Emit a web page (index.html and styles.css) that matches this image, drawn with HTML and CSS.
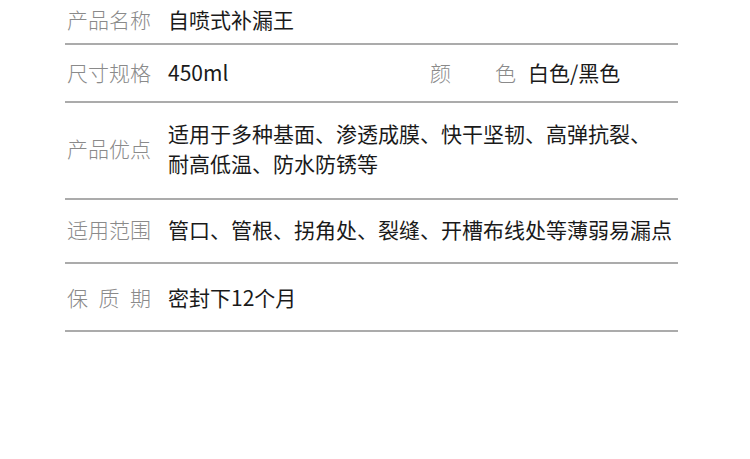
FILE: index.html
```html
<!DOCTYPE html>
<html lang="zh-CN">
<head>
<meta charset="utf-8">
<link rel="stylesheet" href="styles.css">
</head>
<body>
<div class="table">
  <div class="row r1">
    <div class="label">产品名称</div>
    <div class="value">自喷式补漏王</div>
  </div>
  <div class="row r2">
    <div class="label">尺寸规格</div>
    <div class="value v-short">450ml</div>
    <div class="label spread wide"><span>颜</span><span>色</span></div>
    <div class="value v-second">白色/黑色</div>
  </div>
  <div class="row r3">
    <div class="label">产品优点</div>
    <div class="value">适用于多种基面、渗透成膜、快干坚韧、高弹抗裂、<br>耐高低温、防水防锈等</div>
  </div>
  <div class="row r4">
    <div class="label">适用范围</div>
    <div class="value">管口、管根、拐角处、裂缝、开槽布线处等薄弱易漏点</div>
  </div>
  <div class="row r5">
    <div class="label spread"><span>保</span><span>质</span><span>期</span></div>
    <div class="value">密封下12个月</div>
  </div>
</div>
</body>
</html>
```

FILE: styles.css
```css
html, body {
  margin: 0;
  padding: 0;
  background: #ffffff;
}

body {
  font-family: "Noto Sans CJK SC", "Noto Sans", sans-serif;
  font-size: 21px;
  line-height: 30px;
}

.table {
  margin: 0 72px 0 65px;
  width: 613px;
}

.row {
  display: flex;
  align-items: center;
  border-bottom: 2px solid #ababab;
  padding-left: 2px;
}

.r1 { padding-top: 4px; padding-bottom: 9px; }
.r2 { padding-top: 12px; padding-bottom: 14px; }
.r3 { padding-top: 15px; padding-bottom: 20px; }
.r4 { padding-top: 14px; padding-bottom: 18px; }
.r5 { padding-top: 18px; padding-bottom: 18px; }

.label {
  width: 84px;
  flex: none;
  color: #8a8a8a;
  font-weight: 300;
  white-space: nowrap;
}

.spread {
  display: flex;
  justify-content: space-between;
}

.wide {
  width: 86px;
}

.value {
  margin-left: 17px;
  color: #1a1a1a;
  white-space: nowrap;
}

.v-short {
  width: 262px;
  flex: none;
}

.v-second {
  margin-left: 12px;
}
```
